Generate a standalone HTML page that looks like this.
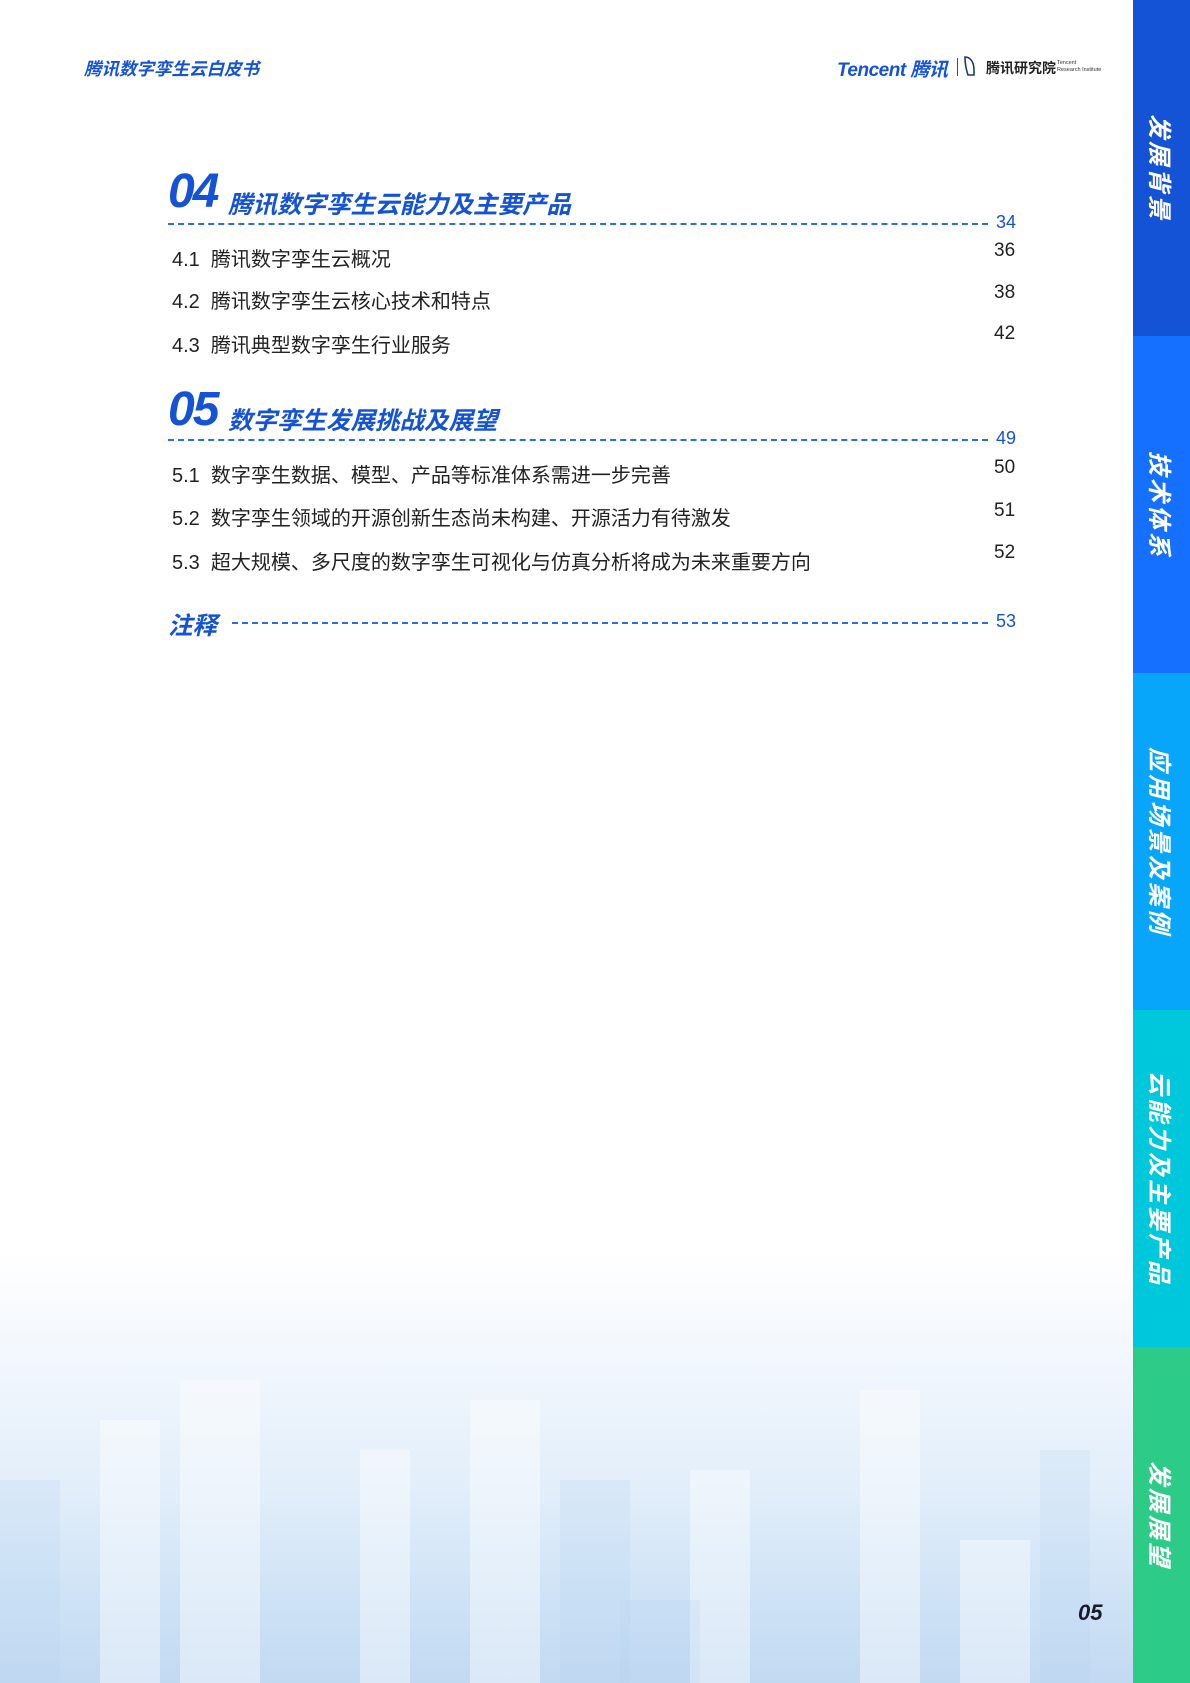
<!DOCTYPE html>
<html><head><meta charset="utf-8"><style>
*{margin:0;padding:0;box-sizing:border-box}
body{width:1190px;height:1683px;position:relative;overflow:hidden;background:#fff;font-family:"Liberation Sans","Noto Sans CJK SC",sans-serif;color:#222}
.bg{position:absolute;left:0;top:1250px;width:1133px;height:433px;background:linear-gradient(180deg,#fff 0%,#f2f7fd 25%,#e2eefa 55%,#cfe3f6 80%,#c2d9f2 100%)}
.b{position:absolute;background:rgba(255,255,255,.4)}
.b2{position:absolute;background:rgba(180,210,240,.2)}
.side{position:absolute;left:1133px;width:57px;display:flex;align-items:center;justify-content:center}
.side span{writing-mode:vertical-rl;text-orientation:sideways;color:#fff;font-weight:bold;font-style:italic;font-size:24px;letter-spacing:3px}
.hd{position:absolute;left:84px;top:56px;color:#1553d6;font-weight:bold;font-style:italic;font-size:17.5px}
.num{position:absolute;left:168px;font-size:48px;font-weight:bold;font-style:italic;color:#1553d6;letter-spacing:-2px}
.tt{position:absolute;font-size:24.5px;font-weight:bold;font-style:italic;color:#1553d6}
.dl{position:absolute;left:168px;width:820px;border-top:2px dashed #2a6fe0;height:0}
.pn{position:absolute;left:996px;font-size:18px;color:#1553d6}
.it{position:absolute;left:172px;font-size:20px;color:#222}
.ip{position:absolute;left:994px;font-size:19px;color:#222}
</style></head><body>
<div class="bg"></div>
<div class="b" style="left:100px;top:1420px;width:60px;height:263px"></div>
<div class="b" style="left:180px;top:1380px;width:80px;height:303px"></div>
<div class="b2" style="left:0;top:1480px;width:60px;height:203px"></div>
<div class="b" style="left:360px;top:1450px;width:50px;height:233px"></div>
<div class="b" style="left:470px;top:1400px;width:70px;height:283px"></div>
<div class="b2" style="left:560px;top:1480px;width:70px;height:203px"></div>
<div class="b" style="left:690px;top:1470px;width:60px;height:213px"></div>
<div class="b" style="left:860px;top:1390px;width:60px;height:293px"></div>
<div class="b2" style="left:620px;top:1600px;width:80px;height:83px"></div>
<div class="b" style="left:960px;top:1540px;width:70px;height:143px"></div>
<div class="b2" style="left:1040px;top:1450px;width:50px;height:233px"></div>

<div class="side" style="top:0;height:336px;background:#1553d6"><span>发展背景</span></div>
<div class="side" style="top:336px;height:337px;background:#1570ff"><span>技术体系</span></div>
<div class="side" style="top:673px;height:337px;background:#08a6fa"><span>应用场景及案例</span></div>
<div class="side" style="top:1010px;height:337px;background:#00c8dc"><span>云能力及主要产品</span></div>
<div class="side" style="top:1347px;height:336px;background:#2ccb88"><span>发展展望</span></div>

<div class="hd">腾讯数字孪生云白皮书</div>
<div style="position:absolute;left:837px;top:55px;color:#1553d6;font-weight:bold;font-style:italic;font-size:19px;letter-spacing:-0.5px">Tencent 腾讯</div>
<div style="position:absolute;left:957px;top:58px;width:1px;height:18px;background:#1553d6"></div>
<svg style="position:absolute;left:963px;top:55px" width="13" height="22" viewBox="0 0 13 22"><path d="M2 2 C8 2 11 8 11 15 L11 20 L5 20 C3 14 2 8 2 2Z" fill="none" stroke="#1a3a7a" stroke-width="1.6"/></svg>
<div style="position:absolute;left:986px;top:58px;font-size:14px;color:#222;font-weight:bold">腾讯研究院</div>
<div style="position:absolute;left:1057px;top:60px;font-size:5.5px;color:#333;line-height:7px">Tencent<br>Research Institute</div>

<div class="num" style="top:164px">04</div>
<div class="tt" style="left:228px;top:186px">腾讯数字孪生云能力及主要产品</div>
<div class="dl" style="top:223px"></div>
<div class="pn" style="top:212px">34</div>
<div class="it" style="top:243px">4.1&nbsp; 腾讯数字孪生云概况</div>
<div class="ip" style="top:240px">36</div>
<div class="it" style="top:285px">4.2&nbsp; 腾讯数字孪生云核心技术和特点</div>
<div class="ip" style="top:282px">38</div>
<div class="it" style="top:329px">4.3&nbsp; 腾讯典型数字孪生行业服务</div>
<div class="ip" style="top:323px">42</div>

<div class="num" style="top:382px">05</div>
<div class="tt" style="left:228px;top:402px">数字孪生发展挑战及展望</div>
<div class="dl" style="top:439px"></div>
<div class="pn" style="top:428px">49</div>
<div class="it" style="top:459px">5.1&nbsp; 数字孪生数据、模型、产品等标准体系需进一步完善</div>
<div class="ip" style="top:457px">50</div>
<div class="it" style="top:502px">5.2&nbsp; 数字孪生领域的开源创新生态尚未构建、开源活力有待激发</div>
<div class="ip" style="top:500px">51</div>
<div class="it" style="top:546px">5.3&nbsp; 超大规模、多尺度的数字孪生可视化与仿真分析将成为未来重要方向</div>
<div class="ip" style="top:542px">52</div>

<div class="tt" style="left:168px;top:607px">注释</div>
<div class="dl" style="top:622px;left:232px;width:756px"></div>
<div class="pn" style="top:611px">53</div>

<div style="position:absolute;left:1078px;top:1600px;font-size:22px;font-weight:bold;font-style:italic;color:#1a1a2a">05</div>
</body></html>
